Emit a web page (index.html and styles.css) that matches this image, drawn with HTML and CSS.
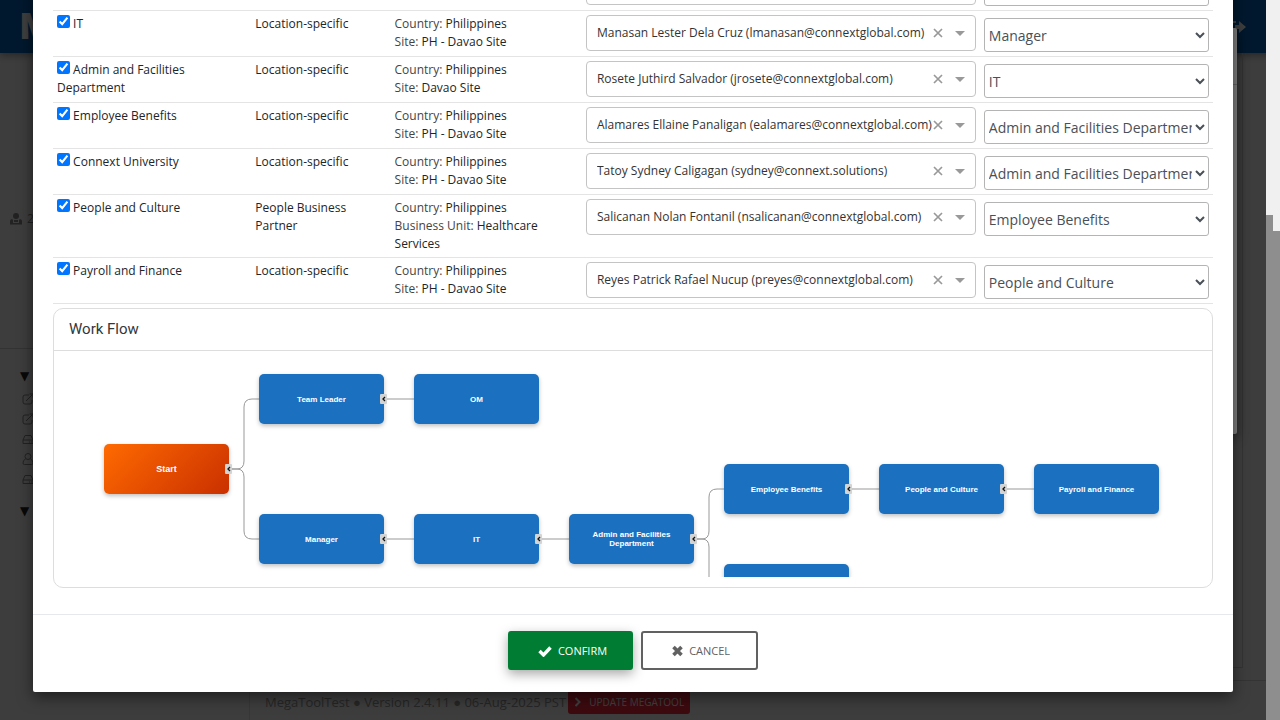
FILE: index.html
```html
<!DOCTYPE html>
<html lang="en">
<head>
<meta charset="utf-8">
<title>MegaToolTest</title>
<link rel="stylesheet" href="styles.css">
</head>
<body>
<svg class="defs" aria-hidden="true">
  <symbol id="edit" viewBox="0 0 12 12"><path d="M7 2H3Q1 2 1 4v5q0 2 2 2h5q2 0 2-2V7M4 8l6-6M7.500 1H11v3.500" fill="none" stroke="currentColor"/></symbol>
  <symbol id="drive" viewBox="0 0 12 12"><path d="M1 7l2-4.500h6L11 7v3.500H1zM1 7h10M7 9h1M9 9h1" fill="none" stroke="currentColor"/></symbol>
  <symbol id="user" viewBox="0 0 12 12"><circle cx="6" cy="3.500" r="3" fill="none" stroke="currentColor"/><path d="M3.500 6Q1 7 1 10q0 1.500 1.500 1.500h7Q11 11.500 11 10q0-3-2.500-4" fill="none" stroke="currentColor"/></symbol>
  <symbol id="cross" viewBox="0 0 10 10"><path d="M1 1l8 8M9 1L1 9" fill="none" stroke="currentColor" stroke-width="1.700"/></symbol>
  <symbol id="caret" viewBox="0 0 10 5"><path d="M0 0h10L5 5z" fill="currentColor"/></symbol>
</svg>

<div class="app">
  <header class="topbar">
    <span class="logo">M</span>
    <svg class="signout" viewBox="0 0 16 14"><path d="M0 1h6v2H2v8h4v2H0zM5 5h4V1l7 6-7 6V9H5z" fill="currentColor"/></svg>
  </header>
  <div class="body">
    <nav class="sidebar">
      <div class="profile">
        <svg viewBox="0 0 12 12"><circle cx="6" cy="3" r="3" fill="currentColor"/><path d="M0 11.500V8q0-1.500 2-2l1 1v3h6V7l1-1q2 .5 2 2v3.500zM4 7h4v2H4z" fill="currentColor"/></svg>
        <span>2</span>
      </div>
      <div class="tree">
        <span class="fold">▼</span>
        <svg><use href="#edit"/></svg>
        <svg><use href="#edit"/></svg>
        <svg><use href="#drive"/></svg>
        <svg><use href="#user"/></svg>
        <svg><use href="#drive"/></svg>
        <span class="fold">▼</span>
      </div>
    </nav>
    <main class="content">
      <div class="panel"></div>
      <footer class="footer">
        <span>MegaToolTest ● Version 2.4.11 ● 06-Aug-2025 PST</span>
        <button class="update" type="button"><svg viewBox="0 0 8 10"><path d="M1.500 1l4 4-4 4" fill="none" stroke="currentColor" stroke-width="2"/></svg>UPDATE MEGATOOL</button>
      </footer>
    </main>
  </div>
</div>

<div class="backdrop"></div>
<div class="under"><div class="under-head"></div></div>
<div class="backdrop"></div>

<div class="overlay">
  <section class="modal" role="dialog" aria-label="Work flow settings">
    <div class="modal-body">
      <table class="steps">
        <colgroup><col class="c1"><col class="c2"><col class="c3"><col class="c4"><col class="c5"></colgroup>
        <tbody>
          <tr>
            <td></td><td>People Business Partner</td>
            <td><span class="key">Country:</span> Philippines<br><span class="key">Business Unit:</span></td>
            <td><div class="combo"><input type="text" aria-label="Manager assignee"><button type="button" aria-label="Clear"><svg class="x"><use href="#cross"/></svg></button><button type="button" aria-label="Open"><svg class="caret"><use href="#caret"/></svg></button></div></td>
            <td><select aria-label="Manager follows"><option></option></select></td>
          </tr>
          <tr>
            <td><label><input type="checkbox" checked> IT</label></td><td>Location-specific</td>
            <td><span class="key">Country:</span> Philippines<br><span class="key">Site:</span> PH - Davao Site</td>
            <td><div class="combo"><input type="text" aria-label="IT assignee" value="Manasan Lester Dela Cruz (lmanasan@connextglobal.com)"><button type="button" aria-label="Clear"><svg class="x"><use href="#cross"/></svg></button><button type="button" aria-label="Open"><svg class="caret"><use href="#caret"/></svg></button></div></td>
            <td><select aria-label="IT follows"><option>Manager</option></select></td>
          </tr>
          <tr>
            <td><label><input type="checkbox" checked> Admin and Facilities Department</label></td><td>Location-specific</td>
            <td><span class="key">Country:</span> Philippines<br><span class="key">Site:</span> Davao Site</td>
            <td><div class="combo"><input type="text" aria-label="Admin and Facilities assignee" value="Rosete Juthird Salvador (jrosete@connextglobal.com)"><button type="button" aria-label="Clear"><svg class="x"><use href="#cross"/></svg></button><button type="button" aria-label="Open"><svg class="caret"><use href="#caret"/></svg></button></div></td>
            <td><select aria-label="Admin and Facilities follows"><option>IT</option></select></td>
          </tr>
          <tr>
            <td><label><input type="checkbox" checked> Employee Benefits</label></td><td>Location-specific</td>
            <td><span class="key">Country:</span> Philippines<br><span class="key">Site:</span> PH - Davao Site</td>
            <td><div class="combo"><input type="text" aria-label="Employee Benefits assignee" value="Alamares Ellaine Panaligan (ealamares@connextglobal.com)"><button type="button" aria-label="Clear"><svg class="x"><use href="#cross"/></svg></button><button type="button" aria-label="Open"><svg class="caret"><use href="#caret"/></svg></button></div></td>
            <td><select aria-label="Employee Benefits follows"><option>Admin and Facilities Department</option></select></td>
          </tr>
          <tr>
            <td><label><input type="checkbox" checked> Connext University</label></td><td>Location-specific</td>
            <td><span class="key">Country:</span> Philippines<br><span class="key">Site:</span> PH - Davao Site</td>
            <td><div class="combo"><input type="text" aria-label="Connext University assignee" value="Tatoy Sydney Caligagan (sydney@connext.solutions)"><button type="button" aria-label="Clear"><svg class="x"><use href="#cross"/></svg></button><button type="button" aria-label="Open"><svg class="caret"><use href="#caret"/></svg></button></div></td>
            <td><select aria-label="Connext University follows"><option>Admin and Facilities Department</option></select></td>
          </tr>
          <tr>
            <td><label><input type="checkbox" checked> People and Culture</label></td><td>People Business Partner</td>
            <td><span class="key">Country:</span> Philippines<br><span class="key">Business Unit:</span> Healthcare Services</td>
            <td><div class="combo"><input type="text" aria-label="People and Culture assignee" value="Salicanan Nolan Fontanil (nsalicanan@connextglobal.com)"><button type="button" aria-label="Clear"><svg class="x"><use href="#cross"/></svg></button><button type="button" aria-label="Open"><svg class="caret"><use href="#caret"/></svg></button></div></td>
            <td><select aria-label="People and Culture follows"><option>Employee Benefits</option></select></td>
          </tr>
          <tr>
            <td><label><input type="checkbox" checked> Payroll and Finance</label></td><td>Location-specific</td>
            <td><span class="key">Country:</span> Philippines<br><span class="key">Site:</span> PH - Davao Site</td>
            <td><div class="combo"><input type="text" aria-label="Payroll and Finance assignee" value="Reyes Patrick Rafael Nucup (preyes@connextglobal.com)"><button type="button" aria-label="Clear"><svg class="x"><use href="#cross"/></svg></button><button type="button" aria-label="Open"><svg class="caret"><use href="#caret"/></svg></button></div></td>
            <td><select aria-label="Payroll and Finance follows"><option>People and Culture</option></select></td>
          </tr>
        </tbody>
      </table>

      <section class="flow">
        <h2>Work Flow</h2>
        <div class="canvas">
          <svg class="links" width="1158" height="226" fill="none" stroke="#999">
            <path d="M175 118h8q7 0 7-8V56q0-8 8-8h7M175 118h8q7 0 7 8v54q0 8 8 8h7"/>
            <path d="M330 48h30M330 188h30M485 188h30"/>
            <path d="M640 188h8q7 0 7-8v-34q0-8 8-8h7M640 188h8q7 0 7 8v40"/>
            <path d="M795 138h30M950 138h30"/>
          </svg>
          <div class="node start" style="left:50px;top:93px">Start</div>
          <div class="node" style="left:205px;top:23px">Team Leader</div>
          <div class="node" style="left:360px;top:23px">OM</div>
          <div class="node" style="left:205px;top:163px">Manager</div>
          <div class="node" style="left:360px;top:163px">IT</div>
          <div class="node" style="left:515px;top:163px">Admin and Facilities Department</div>
          <div class="node" style="left:670px;top:113px">Employee Benefits</div>
          <div class="node" style="left:825px;top:113px">People and Culture</div>
          <div class="node" style="left:980px;top:113px">Payroll and Finance</div>
          <div class="node" style="left:670px;top:213px"></div>
          <svg class="links" width="1158" height="226">
            <defs><g id="toggle"><rect x="-4" y="-5" width="7" height="10" rx="1" fill="#d3d3d3"/><path d="M1-2L-1 0l2 2" fill="none" stroke="#111" stroke-width="1.300"/></g></defs>
            <use href="#toggle" x="175" y="118"/><use href="#toggle" x="330" y="48"/><use href="#toggle" x="330" y="188"/>
            <use href="#toggle" x="485" y="188"/><use href="#toggle" x="640" y="188"/><use href="#toggle" x="795" y="138"/><use href="#toggle" x="950" y="138"/>
          </svg>
        </div>
      </section>
    </div>
    <div class="modal-foot">
      <button class="confirm" type="button"><svg width="14" height="12" viewBox="0 0 14 12"><path d="M1.500 6l4 4 7-7.500" fill="none" stroke="currentColor" stroke-width="3.400"/></svg>CONFIRM</button>
      <button class="cancel" type="button"><svg width="11" height="12" viewBox="0 0 11 12"><path d="M1.500 2l8 8M9.500 2l-8 8" fill="none" stroke="currentColor" stroke-width="3.600"/></svg>CANCEL</button>
    </div>
  </section>
</div>
<div class="scroll"><div class="thumb-a"></div><div class="thumb-b"></div></div>
</body>
</html>
```
FILE: styles.css
```css
* { box-sizing: border-box; }
body {
  margin: 0;
  height: 100vh;
  overflow: hidden;
  font: 12px/18px "Open Sans", "Noto Sans", sans-serif;
  color: #212529;
}
button, input, select { font: inherit; color: inherit; }
.defs { display: none; }

/* page behind the dialogs */
.app { display: flex; flex-direction: column; height: 100vh; background: #f5f5f5; }
.topbar {
  display: flex; align-items: center; justify-content: space-between;
  height: 53px; padding: 0 34px 0 20px;
  background: #0062b8; color: #fff; box-shadow: 0 2px 8px rgba(0,0,0,.4);
}
.logo { font: 900 36px/40px Roboto, sans-serif; }
.signout { width: 16px; height: 14px; }
.body { flex: 1; display: flex; min-height: 0; }
.sidebar { width: 250px; border-right: 1px solid #ddd; }
.profile {
  display: flex; align-items: center; gap: 5px;
  height: 296px; padding: 36px 0 0 10px;
  border-bottom: 1px solid #ccc; color: #888;
}
.profile svg { width: 12px; height: 12px; }
.tree { display: flex; flex-direction: column; gap: 8px; padding: 17px 0 0 22px; color: #888; }
.tree svg { width: 12px; height: 12px; }
.fold { margin: 0 0 -1px -2px; font: 12px/20px "DejaVu Sans", sans-serif; color: #222; }
.tree svg + .fold { margin-top: 8px; }
.content { flex: 1; display: flex; flex-direction: column; }
.panel { flex: 1; margin: 0 37px 12px 0; border: 1px solid #d0d0d0; border-top: 0; }
.footer {
  display: flex; align-items: center; gap: 2px;
  height: 40px; padding: 2px 15px 0;
  border-top: 1px solid #d0d0d0; font-size: 13px; color: #999;
}
.update {
  display: flex; align-items: center; gap: 7px;
  height: 24px; padding: 0 6px; border: 0; border-radius: 3px;
  background: #f0283c; color: #fff; font-size: 10px;
}
.update svg { width: 8px; height: 10px; }

.backdrop { position: absolute; inset: 0; background: rgba(0,0,0,.5); }
.under {
  position: absolute; top: 28px; left: 40px; right: 43px; height: 406px;
  background: #fff; border-radius: 2px; box-shadow: 0 4px 12px rgba(0,0,0,.4);
}
.under-head { height: 57px; border-bottom: 1px solid #ccc; }

/* dialog */
.overlay {
  position: absolute; inset: 0 14px 0 0; overflow: hidden;
  display: flex; align-items: flex-end; justify-content: center;
  padding: 0 33px 28px;
}
.modal { width: 100%; background: #fff; border-radius: 2px; box-shadow: 0 5px 15px rgba(0,0,0,.5); }
.modal-body { padding: 20px 20px 26px; }
.steps { width: 100%; border-collapse: collapse; table-layout: fixed; }
.c1 { width: 17.1%; }
.c2 { width: 12%; }
.c3 { width: 16.5%; }
.c4 { width: 34.3%; }
.c5 { width: 20.1%; }
.steps td { padding: 4px; vertical-align: top; border-bottom: 1px solid #e4e4e4; }
.steps input[type="checkbox"] { width: 13px; height: 13px; margin: 0; accent-color: #0075ff; }
.key { color: #444; }
.combo {
  display: flex; align-items: center;
  height: 36px; padding: 0 10px;
  border: 1px solid #c4c4c4; border-radius: 4px; color: #333;
}
.combo input { flex: 1; min-width: 0; margin-right: -1px; padding: 0; border: 0; outline: 0; background: none; }
.combo button { display: flex; padding: 0; border: 0; background: none; color: #999; }
.combo .x { width: 10px; height: 10px; margin-right: 12px; }
.caret { width: 10px; height: 5px; }
.steps select {
  display: block; width: 100%; height: 34px; margin-top: 3px;
  border: 1px solid #b4b4b4; border-radius: 3px;
  background: #fff; color: #495057; font-size: 14px;
}

.flow { margin-top: 4px; padding-bottom: 10px; border: 1px solid #ddd; border-radius: 10px; }
.flow h2 {
  margin: 0; padding: 10px 15px 11px;
  border-bottom: 1px solid #ddd;
  font: 400 15px/20px Roboto, sans-serif; color: #33373b;
}
.canvas { position: relative; height: 226px; overflow: hidden; }
.links { position: absolute; left: 0; top: 0; }
.node {
  position: absolute; display: flex; align-items: center; justify-content: center;
  width: 125px; height: 50px; padding: 0 20px; border-radius: 5px;
  background: #1c70c0; color: #fff; text-align: center;
  font: bold 8px/9px "Liberation Sans", sans-serif;
  box-shadow: 0 2px 4px rgba(0,0,0,.25);
}
.start { background: linear-gradient(135deg, #ff6a00, #c93000); font-size: 9px; }

.modal-foot {
  display: flex; justify-content: center; gap: 8px;
  padding: 16px 20px 22px; border-top: 1px solid #e6e8eb;
}
.modal-foot button {
  display: flex; align-items: center; justify-content: center; gap: 6px;
  height: 39px; border: 2px solid; border-radius: 3px;
  font-size: 11px;
}
.modal-foot .confirm {
  padding: 0 24px 0 28px; border-color: #007d32; background: #007d32; color: #fff;
  box-shadow: 0 4px 12px rgba(0,0,0,.35);
}
.modal-foot .cancel { padding: 0 26px 0 29px; border-color: #616161; background: #fff; color: #616161; }

/* scroll tracks */
.scroll { position: absolute; top: 0; right: 0; bottom: 0; width: 14px; display: flex; background: #f0f0f0; }
.scroll div { flex: 1; background: #8e8e8e; }
.thumb-a { margin-top: 215px; }
.thumb-b { margin-top: 231px; }
```
